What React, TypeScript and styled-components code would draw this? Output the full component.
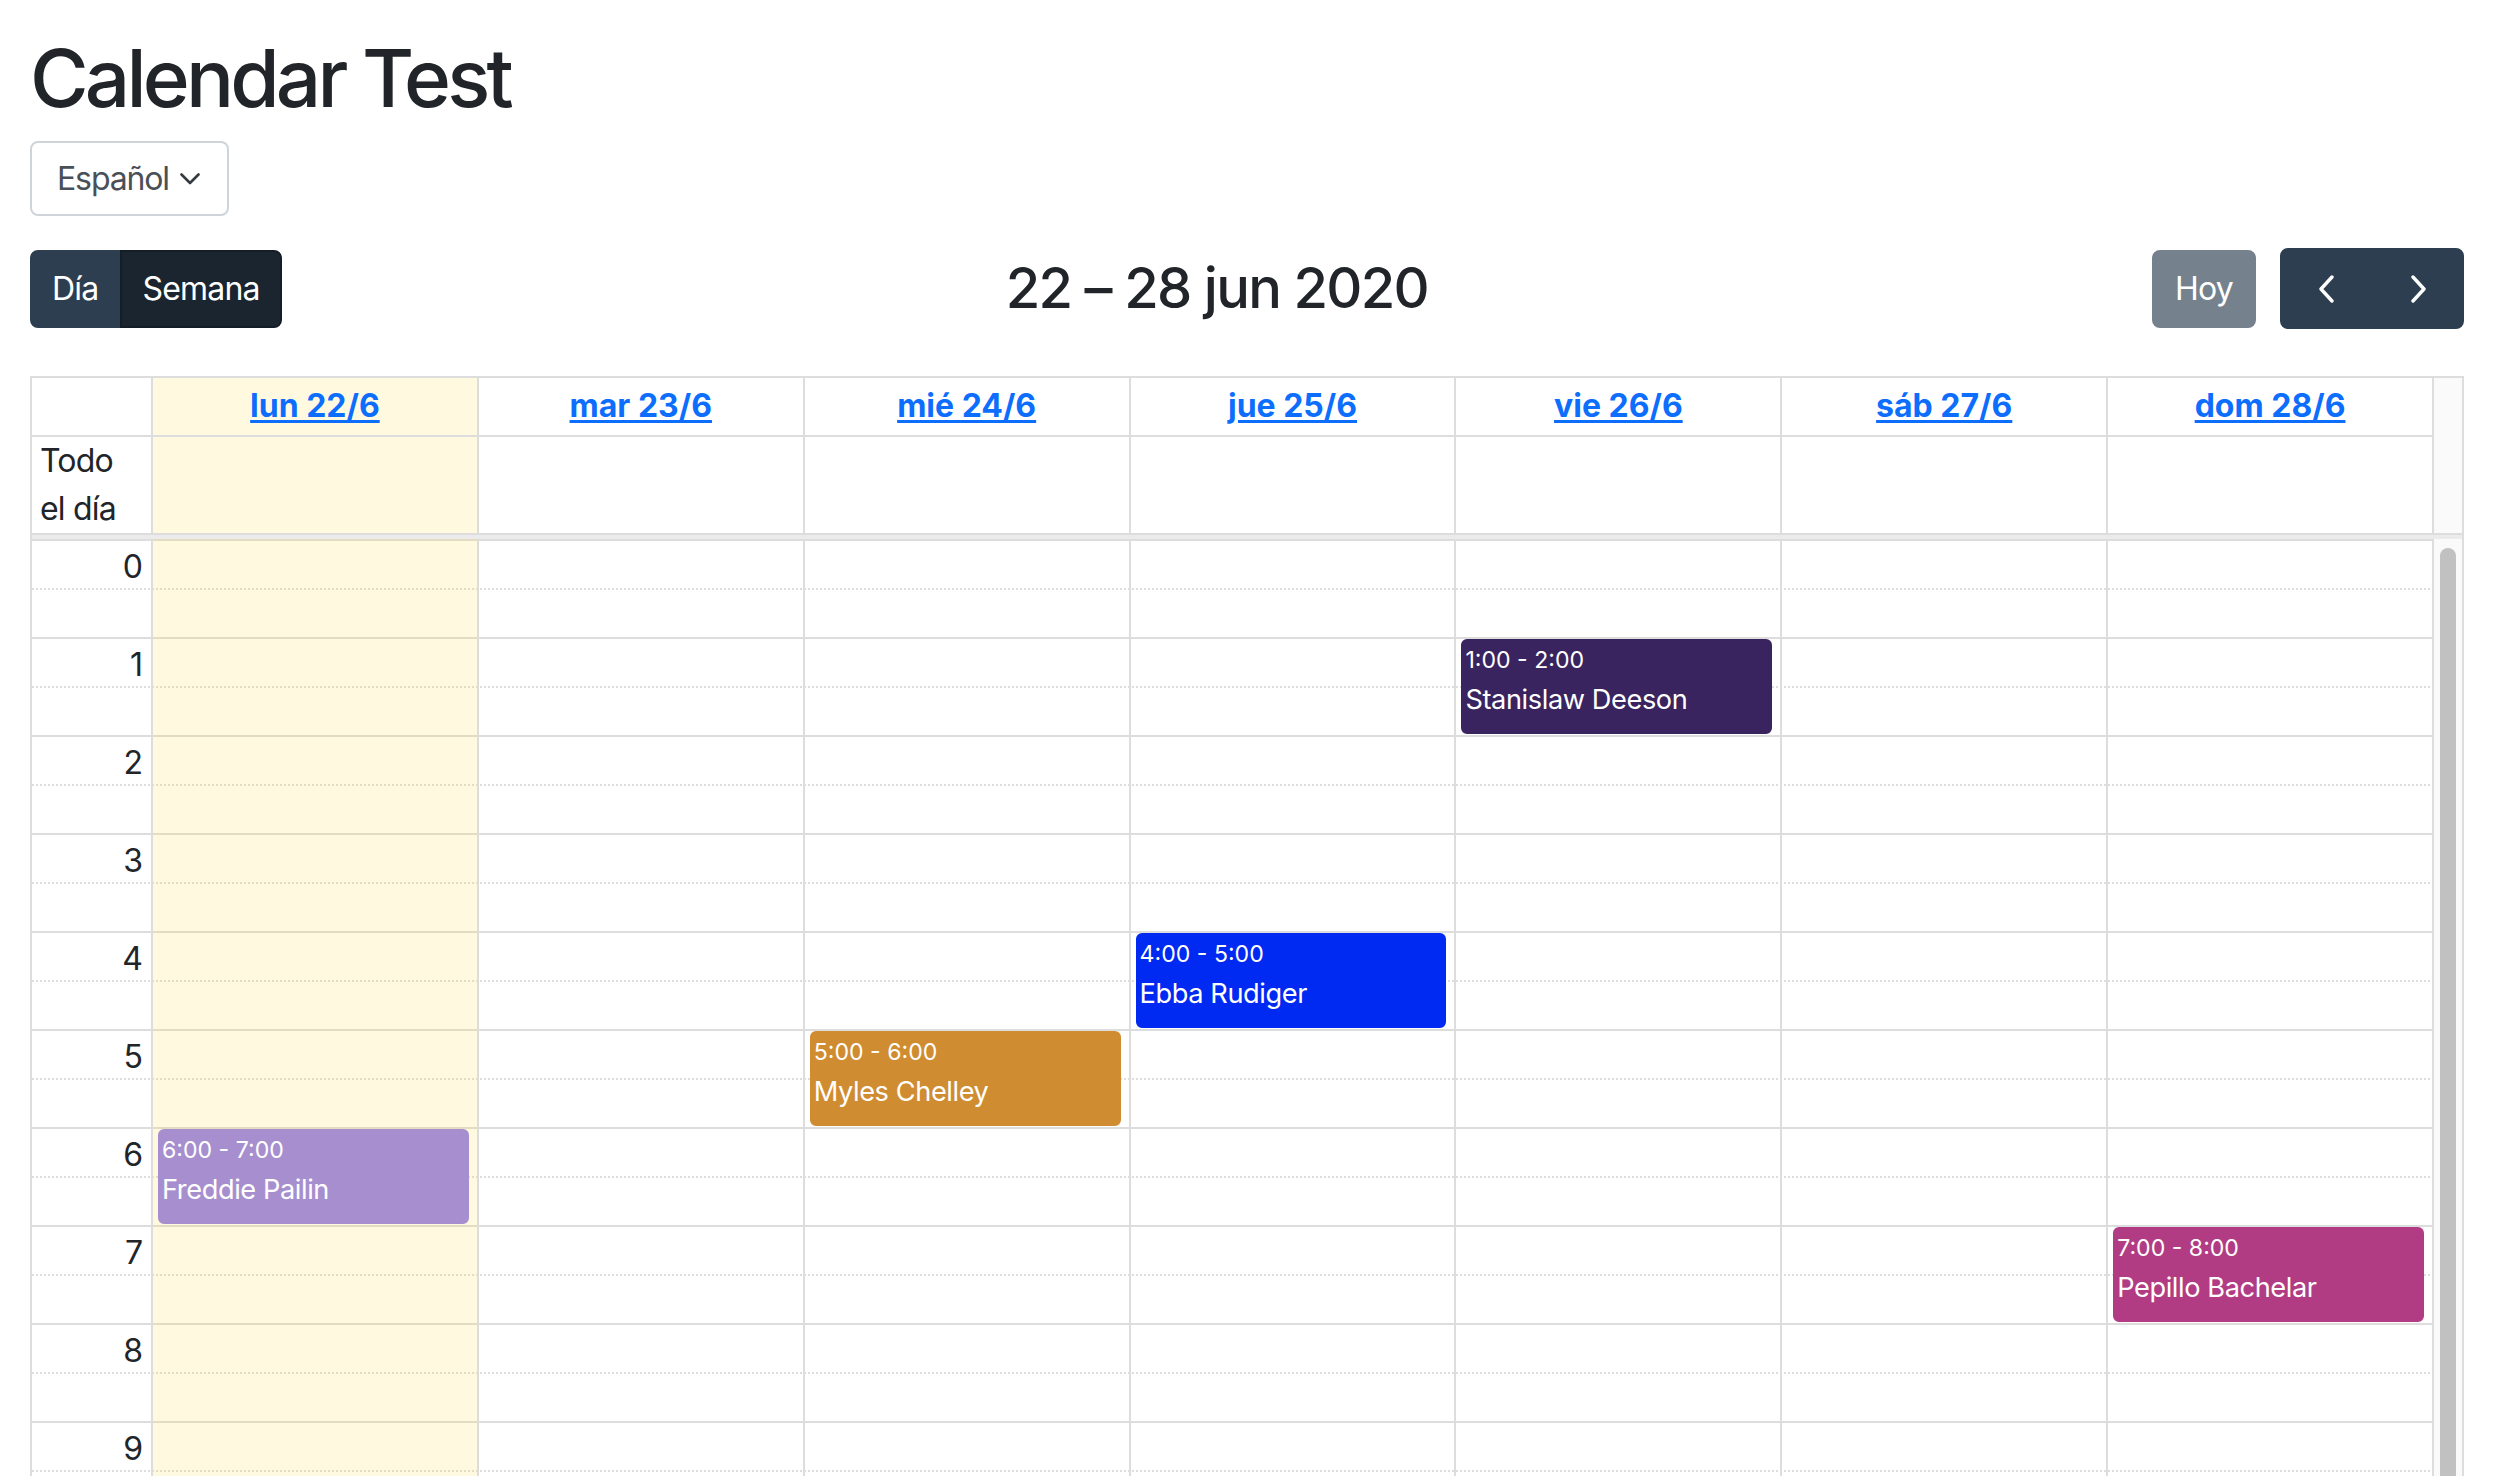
import React from "react";
import styled, { createGlobalStyle } from "styled-components";

const HALF = 49;
const HOUR = HALF * 2;
const LINE = "#dddddd";
const FONT = `Inter, "Noto Sans", "Liberation Sans", sans-serif`;

const GlobalStyle = createGlobalStyle`
  html, body { margin: 0; padding: 0; background: #fff; overflow: hidden; }
  body { font-family: ${FONT}; color: #212529; }
  *, *::before, *::after { box-sizing: border-box; }
`;

const Page = styled.div`
  padding: 30px;
  height: 1476px;
  overflow: hidden;
`;

const Title = styled.h1`
  margin: 0 0 15px;
  font-size: 80px;
  font-weight: 500;
  line-height: 96px;
  letter-spacing: -0.048em;
  color: #212529;
`;

const LangSelect = styled.button`
  display: flex;
  align-items: center;
  gap: 11px;
  height: 75px;
  margin: 0 0 32px;
  padding: 0 27px 0 25px;
  border: 2px solid #ced4da;
  border-radius: 8px;
  background: #fff;
  font-family: ${FONT};
  font-size: 32px;
  line-height: 48px;
  letter-spacing: -0.035em;
  color: #495057;
`;

const Toolbar = styled.div`
  display: flex;
  justify-content: space-between;
  align-items: center;
  margin-bottom: 47px;
`;

const Chunk = styled.div`
  display: flex;
  align-items: center;
  gap: 24px;
`;

const ButtonGroup = styled.div`
  display: flex;
`;

const ToolButton = styled.button<{ $active?: boolean }>`
  height: 78px;
  padding: 0 20px;
  border: 2px solid ${(p) => (p.$active ? "#151e27" : "#2c3e50")};
  background: ${(p) => (p.$active ? "#1a252f" : "#2c3e50")};
  color: #fff;
  font-family: ${FONT};
  font-size: 32px;
  line-height: 48px;
  letter-spacing: -0.025em;
  border-radius: 0;
  &:first-child { border-radius: 8px 0 0 8px; }
  &:last-child { border-radius: 0 8px 8px 0; }
`;

const TodayButton = styled.button`
  height: 78px;
  padding: 0 21px;
  border: 2px solid #2c3e50;
  border-radius: 8px;
  background: #2c3e50;
  opacity: 0.65;
  color: #fff;
  font-family: ${FONT};
  font-size: 32px;
  line-height: 48px;
  letter-spacing: -0.025em;
`;

const IconButton = styled.button`
  width: 92px;
  height: 81px;
  display: flex;
  align-items: center;
  justify-content: center;
  border: 2px solid #2c3e50;
  background: #2c3e50;
  border-radius: 0;
  &:first-child { border-radius: 8px 0 0 8px; }
  &:last-child { border-radius: 0 8px 8px 0; }
`;

const ToolbarTitle = styled.h2`
  margin: 0;
  font-size: 56px;
  font-weight: 500;
  line-height: 1.2;
  letter-spacing: -0.03em;
  color: #212529;
`;

const Calendar = styled.div`
  border-top: 2px solid ${LINE};
  border-left: 2px solid ${LINE};
`;

const HeadGrid = styled.div`
  display: grid;
  grid-template-columns: 121px repeat(7, 1fr) 30px;
  grid-template-rows: 59px 98px;
`;

const HeadCell = styled.div<{ $today?: boolean }>`
  border-right: 2px solid ${LINE};
  border-bottom: 2px solid ${LINE};
  background: ${(p) => (p.$today ? "rgba(255, 220, 40, 0.15)" : "transparent")};
  display: flex;
  justify-content: center;
  padding: 4px;
`;

const DayLink = styled.a`
  font-size: 32px;
  line-height: 48px;
  font-weight: 700;
  letter-spacing: 0;
  color: #0d6efd;
  text-decoration: underline;
  text-underline-offset: 3px;
`;

const AllDayAxis = styled.div`
  border-right: 2px solid ${LINE};
  border-bottom: 2px solid ${LINE};
  padding: 0 8px;
  font-size: 32px;
  line-height: 48px;
  letter-spacing: -0.025em;
  color: #212529;
`;

const AllDayCell = styled.div<{ $today?: boolean }>`
  border-right: 2px solid ${LINE};
  border-bottom: 2px solid ${LINE};
  background: ${(p) => (p.$today ? "rgba(255, 220, 40, 0.15)" : "transparent")};
`;

const Gutter = styled.div`
  grid-column: 9;
  grid-row: 1 / span 2;
  border-right: 2px solid ${LINE};
  border-bottom: 2px solid ${LINE};
  background: #fafafa;
`;

const Divider = styled.div`
  height: 4px;
  background: #ebebeb;
  border-right: 2px solid ${LINE};
`;

const Body = styled.div`
  display: flex;
`;

const SlotArea = styled.div`
  position: relative;
  flex: 1;
`;

const SlotRow = styled.div<{ $major: boolean }>`
  display: grid;
  grid-template-columns: 121px 1fr;
  height: ${HALF}px;
  border-top: 2px ${(p) => (p.$major ? "solid" : "dotted")} ${LINE};
`;

const AxisLabel = styled.div`
  border-right: 2px solid ${LINE};
  padding: 2px 8px 0;
  text-align: right;
  font-size: 32px;
  line-height: 48px;
  color: #212529;
`;

const Columns = styled.div`
  position: absolute;
  top: 0;
  bottom: 0;
  left: 121px;
  right: 0;
  display: grid;
  grid-template-columns: repeat(7, 1fr);
`;

const DayColumn = styled.div<{ $today?: boolean }>`
  position: relative;
  border-right: 2px solid ${LINE};
  background: ${(p) => (p.$today ? "rgba(255, 220, 40, 0.15)" : "transparent")};
`;

const EventBox = styled.div<{ $start: number; $color: string }>`
  position: absolute;
  left: 5px;
  right: 8px;
  top: ${(p) => p.$start * HOUR + 2}px;
  height: ${HOUR - 3}px;
  padding: 2px;
  border: 2px solid ${(p) => p.$color};
  border-radius: 6px;
  background: ${(p) => p.$color};
  color: #fff;
  overflow: hidden;
`;

const EventTime = styled.div`
  font-size: 23.1px;
  line-height: 1.5;
  margin-bottom: 2px;
  letter-spacing: 0;
  white-space: nowrap;
`;

const EventTitle = styled.div`
  font-size: 27.2px;
  line-height: 1.5;
  letter-spacing: -0.015em;
  white-space: nowrap;
`;

const ScrollTrack = styled.div`
  width: 30px;
  padding: 9px 0 0 6px;
  border-right: 2px solid ${LINE};
  background: #fafafa;
`;

const ScrollThumb = styled.div`
  width: 16px;
  height: 1400px;
  border-radius: 8px;
  background: #c1c1c1;
`;

const Chevron = ({ dir }: { dir: "left" | "right" | "down" }) => {
  if (dir === "down") {
    return (
      <svg width="20" height="12" viewBox="0 0 20 12">
        <polyline points="1.5,1.5 10,10 18.5,1.5" fill="none" stroke="#343a40" strokeWidth="2.6" strokeLinecap="round" strokeLinejoin="round" />
      </svg>
    );
  }
  const pts = dir === "left" ? "14,2 3,14 14,26" : "3,2 14,14 3,26";
  return (
    <svg width="17" height="28" viewBox="0 0 17 28">
      <polyline points={pts} fill="none" stroke="#fff" strokeWidth="3.4" strokeLinecap="round" strokeLinejoin="round" />
    </svg>
  );
};

const days = ["lun 22/6", "mar 23/6", "mié 24/6", "jue 25/6", "vie 26/6", "sáb 27/6", "dom 28/6"];

type Ev = { day: number; start: number; name: string; color: string };
const events: Ev[] = [
  { day: 0, start: 6, name: "Freddie Pailin", color: "#a78fcf" },
  { day: 2, start: 5, name: "Myles Chelley", color: "#d08c30" },
  { day: 3, start: 4, name: "Ebba Rudiger", color: "#0029f2" },
  { day: 4, start: 1, name: "Stanislaw Deeson", color: "#39245f" },
  { day: 6, start: 7, name: "Pepillo Bachelar", color: "#b23c84" },
];

// Only the hours that fit in the visible part of the scroller (0–9)
const slots = Array.from({ length: 20 }, (_, i) => i);

export default function App() {
  return (
    <>
      <GlobalStyle />
      <Page>
        <Title>Calendar Test</Title>
        <LangSelect>
          Español
          <Chevron dir="down" />
        </LangSelect>
        <Toolbar>
          <ButtonGroup>
            <ToolButton>Día</ToolButton>
            <ToolButton $active>Semana</ToolButton>
          </ButtonGroup>
          <ToolbarTitle>22 – 28 jun 2020</ToolbarTitle>
          <Chunk>
            <TodayButton disabled>Hoy</TodayButton>
            <ButtonGroup>
              <IconButton aria-label="prev">
                <Chevron dir="left" />
              </IconButton>
              <IconButton aria-label="next">
                <Chevron dir="right" />
              </IconButton>
            </ButtonGroup>
          </Chunk>
        </Toolbar>
        <Calendar>
          <HeadGrid>
            <HeadCell />
            {days.map((d, i) => (
              <HeadCell key={d} $today={i === 0}>
                <DayLink href="#">{d}</DayLink>
              </HeadCell>
            ))}
            <Gutter />
            <AllDayAxis>
              Todo
              <br />
              el día
            </AllDayAxis>
            {days.map((d, i) => (
              <AllDayCell key={d} $today={i === 0} />
            ))}
          </HeadGrid>
          <Divider />
          <Body>
            <SlotArea>
              {slots.map((s) => (
                <SlotRow key={s} $major={s % 2 === 0}>
                  <AxisLabel>{s % 2 === 0 ? s / 2 : ""}</AxisLabel>
                  <div />
                </SlotRow>
              ))}
              <Columns>
                {days.map((d, i) => (
                  <DayColumn key={d} $today={i === 0}>
                    {events
                      .filter((e) => e.day === i)
                      .map((e) => (
                        <EventBox key={e.name} $start={e.start} $color={e.color}>
                          <EventTime>
                            {e.start}:00 - {e.start + 1}:00
                          </EventTime>
                          <EventTitle>{e.name}</EventTitle>
                        </EventBox>
                      ))}
                  </DayColumn>
                ))}
              </Columns>
            </SlotArea>
            <ScrollTrack>
              <ScrollThumb />
            </ScrollTrack>
          </Body>
        </Calendar>
      </Page>
    </>
  );
}
